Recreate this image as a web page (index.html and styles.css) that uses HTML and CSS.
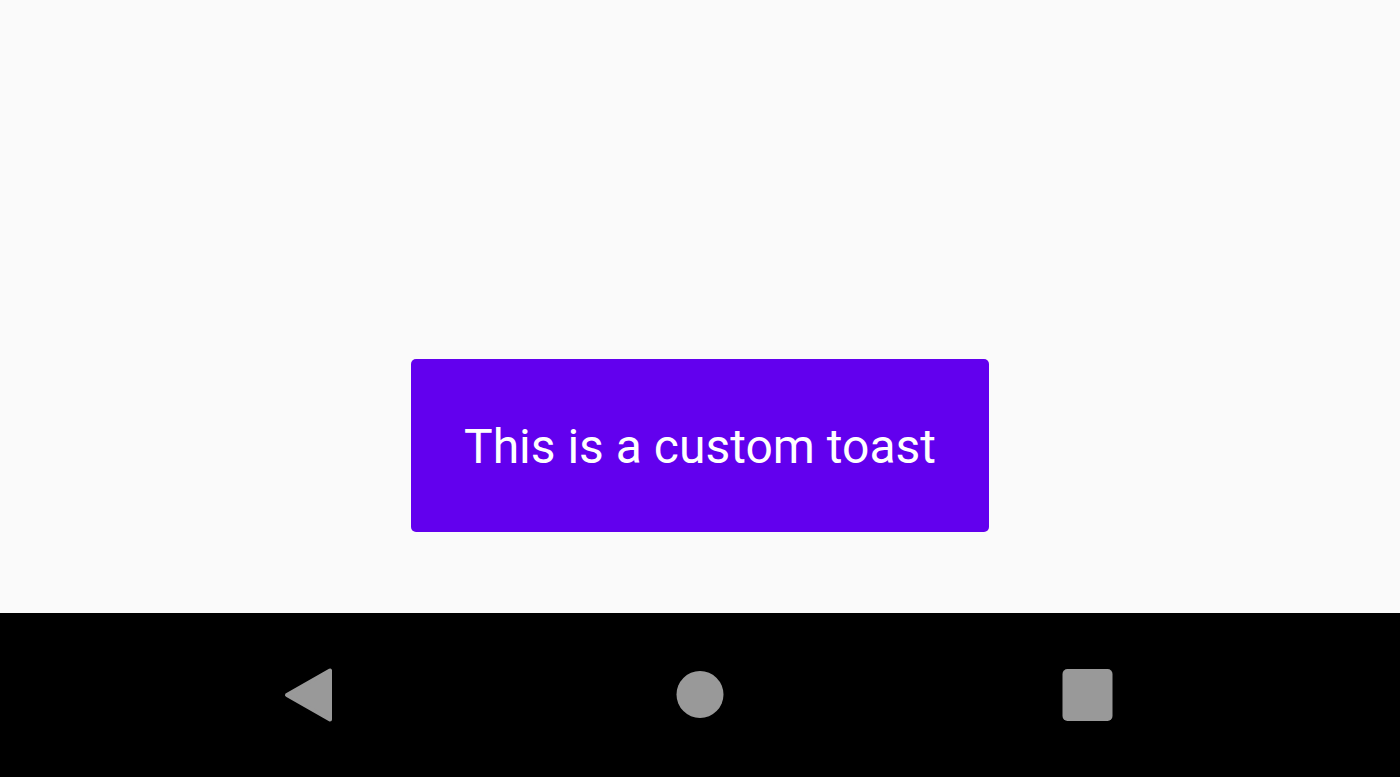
FILE: index.html
```html
<!DOCTYPE html>
<html>
<head>
<meta charset="utf-8">
<link rel="stylesheet" href="styles.css">
</head>
<body>
<div class="screen">
  <main class="content">
    <div class="toast">This is a custom toast</div>
  </main>
  <nav class="navbar">
    <div class="slot">
      <svg width="100" height="56" viewBox="0 0 100 56"><polygon points="25,28 68,3.5 68,52.5" fill="#999" stroke="#999" stroke-width="4" stroke-linejoin="round"/></svg>
    </div>
    <div class="slot">
      <svg width="100" height="56" viewBox="0 0 100 56"><circle cx="50" cy="27.5" r="23.5" fill="#999"/></svg>
    </div>
    <div class="slot">
      <svg width="100" height="56" viewBox="0 0 100 56"><rect x="24.5" y="2" width="50" height="52" rx="5" fill="#999"/></svg>
    </div>
  </nav>
</div>
</body>
</html>
```
FILE: styles.css
```css
html, body {
  margin: 0;
  padding: 0;
}
body {
  width: 1400px;
  height: 777px;
  overflow: hidden;
  font-family: Roboto, "Liberation Sans", sans-serif;
}
.screen {
  display: flex;
  flex-direction: column;
  height: 777px;
}
.content {
  height: 613px;
  background: #fafafa;
  display: flex;
  flex-direction: column;
  align-items: center;
  padding-top: 359px;
  box-sizing: border-box;
}
.toast {
  width: 578px;
  height: 173px;
  box-sizing: border-box;
  background: #6200ee;
  border-radius: 5px;
  color: #ffffff;
  font-size: 48px;
  display: flex;
  align-items: center;
  justify-content: center;
  padding-top: 2px;
}
.navbar {
  height: 164px;
  background: #000;
  display: flex;
  justify-content: center;
  align-items: center;
  gap: 288px;
}
.slot {
  width: 100px;
  height: 56px;
  display: flex;
}
.slot svg {
  display: block;
}
```
